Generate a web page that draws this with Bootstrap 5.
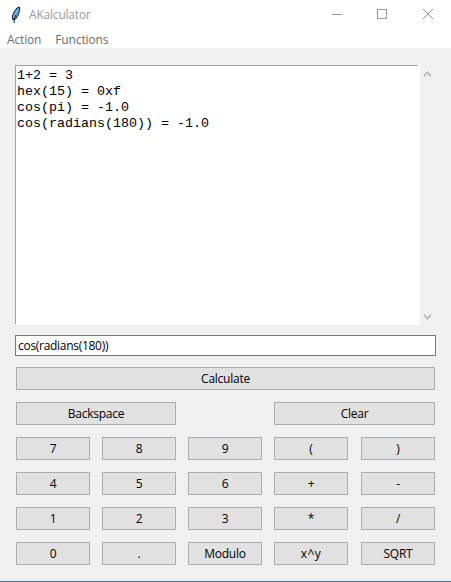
<!DOCTYPE html>
<html lang="en">
<head>
<meta charset="utf-8">
<meta name="viewport" content="width=device-width, initial-scale=1">
<title>AKalculator</title>
<link rel="stylesheet" href="https://cdn.jsdelivr.net/npm/bootstrap@5.3.0/dist/css/bootstrap.min.css">
<style>
  body { font-family: "Open Sans", "Noto Sans", sans-serif; font-size: 12px; line-height: 16px; color: #000; background: #f0f0f0; letter-spacing: -.25px; }
  .window { height: 582px; border-bottom: 1px solid #3a7ca5; }
  .titlebar { height: 30px; padding-left: 9px; color: #999; }
  .titlebar .caption { margin-left: 7px; letter-spacing: -.2px; }
  .controls svg { display: block; width: 46px; height: 30px; }
  .menubar { height: 18px; padding: 2px 0 0 7px; gap: 14px; color: #6d6d6d; letter-spacing: -.15px; }
  .client { padding: 17px 15px 0; }
  .output { width: 405px; height: 260px; padding: 3px 0 0 2px; background: linear-gradient(#a0a0a0, #a0a0a0) 0 0 / 403px 1px no-repeat, linear-gradient(#a0a0a0, #a0a0a0) 0 0 / 1px 259px no-repeat, #fff; color: #000; font: 13.33px/16px "Liberation Mono", monospace; letter-spacing: 0; }
  .scroller { width: 16px; height: 260px; }
  .entry { height: 21px; min-height: 0; margin-top: 10px; padding: 0 2px; border: 1px solid #7a7a7a; background: #fff; color: #000; font-size: 12px; line-height: 19px; letter-spacing: -.29px; }
  .keys { grid-template-columns: 74px 74px 74px 74px 75px; grid-auto-rows: 23px; gap: 12px; margin: 11px 0 0 1px; width: 419px; }
  .keys .btn { --bs-btn-padding-x: 0; --bs-btn-padding-y: 0; --bs-btn-font-size: 12px; --bs-btn-line-height: 21px; --bs-btn-color: #000; --bs-btn-bg: #e1e1e1; --bs-btn-border-color: #adadad; --bs-btn-border-radius: 0; --bs-btn-hover-bg: #e5f1fb; --bs-btn-hover-border-color: #0078d7; letter-spacing: -.25px; }
  .wide { grid-column: 1 / -1; }
  .left-pair { grid-column: 1 / span 2; }
  .right-pair { grid-column: 4 / span 2; }
  .last { margin-left: 1px; }
  .keys .power { letter-spacing: .5px; }
</style>
</head>
<body>
<div class="window d-flex flex-column overflow-hidden">
  <header class="bg-white">
    <div class="titlebar d-flex align-items-center">
      <svg width="13" height="18" viewBox="0 0 13 18" aria-hidden="true">
        <path d="M10.500 1 8 2 5 6 3.300 10.500 3.800 13.800 6.700 12.800 9 9.500 10.500 4.500Z" fill="#5b9ee6" stroke="#111c28"/>
        <path d="M9.300 3 6.700 7.500 5 11.500" stroke="#8cc0f2" fill="none"/>
        <path d="M7 9 5.500 12 5 17" stroke="#10151c" fill="none"/>
      </svg>
      <span class="caption">AKalculator</span>
      <div class="controls d-flex ms-auto">
        <svg viewBox="0 0 46 30" shape-rendering="crispEdges"><path d="M19 14.500h10" stroke="#999"/></svg>
        <svg viewBox="0 0 46 30" shape-rendering="crispEdges"><path d="M18.500 9.500h9v9h-9z" stroke="#999" fill="none"/></svg>
        <svg viewBox="0 0 46 30"><path d="m18 9 10 10M28 9 18 19" stroke="#8e8e8e"/></svg>
      </div>
    </div>
    <nav class="menubar d-flex align-items-center"><span>Action</span><span>Functions</span></nav>
  </header>
  <main class="client">
    <div class="d-flex">
      <pre class="output m-0">1+2 = 3
hex(15) = 0xf
cos(pi) = -1.0
cos(radians(180)) = -1.0</pre>
      <div class="scroller d-flex flex-column justify-content-between">
        <svg width="16" height="17" viewBox="0 0 16 17"><path d="M4 9v3h1v-1h1v-1h1v-1h1v1h1v1h1v1h1V9h-1V8H9V7H8V6H7v1H6v1H5v1z" fill="#bfbfbf" shape-rendering="crispEdges"/></svg>
        <svg width="16" height="17" viewBox="0 0 16 17"><path d="M4 9V6h1v1h1v1h1v1h1V8h1V7h1V6h1v3h-1v1H9v1H8v1H7v-1H6v-1H5V9z" fill="#bfbfbf" shape-rendering="crispEdges"/></svg>
      </div>
    </div>
    <input class="entry form-control rounded-0" type="text" value="cos(radians(180))" aria-label="Expression">
    <div class="keys d-grid">
      <button class="btn wide">Calculate</button>
      <button class="btn left-pair">Backspace</button>
      <button class="btn right-pair">Clear</button>
      <button class="btn">7</button><button class="btn">8</button><button class="btn">9</button><button class="btn">(</button><button class="btn last">)</button>
      <button class="btn">4</button><button class="btn">5</button><button class="btn">6</button><button class="btn">+</button><button class="btn last">-</button>
      <button class="btn">1</button><button class="btn">2</button><button class="btn">3</button><button class="btn">*</button><button class="btn last">/</button>
      <button class="btn">0</button><button class="btn">.</button><button class="btn">Modulo</button><button class="btn power">x^y</button><button class="btn last">SQRT</button>
    </div>
  </main>
</div>
<script src="https://cdn.jsdelivr.net/npm/bootstrap@5.3.0/dist/js/bootstrap.bundle.min.js"></script>
</body>
</html>
